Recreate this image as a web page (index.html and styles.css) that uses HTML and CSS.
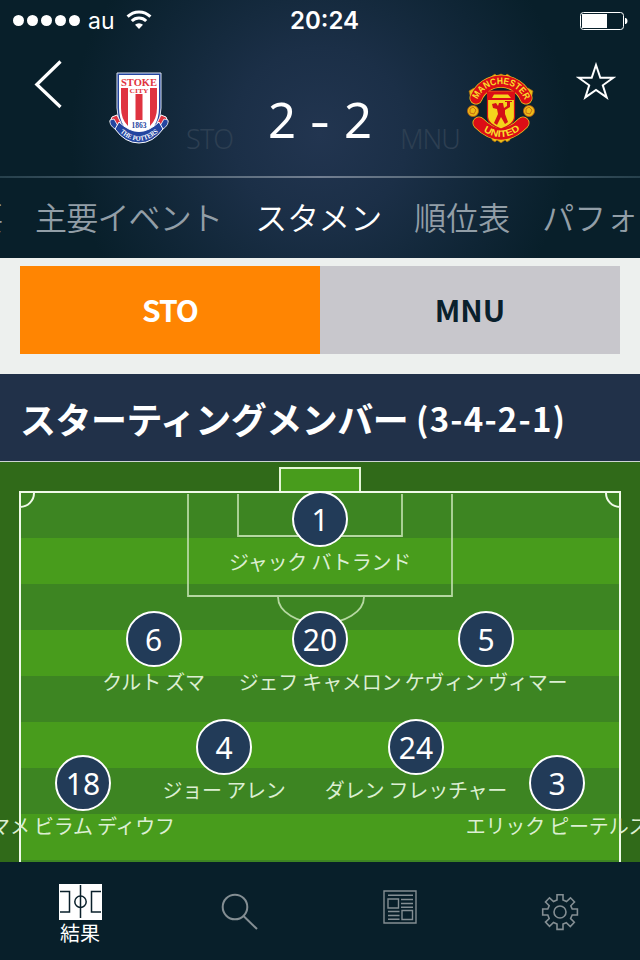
FILE: index.html
```html
<!DOCTYPE html>
<html lang="ja">
<head>
<meta charset="utf-8">
<title>STO 2 - 2 MNU</title>
<link rel="stylesheet" href="styles.css">
</head>
<body>
<header class="header">
  <div class="status">
    <div class="carrier">
      <span class="dots"><i></i><i></i><i></i><i></i><i></i></span>
      <span class="carrier-name">au</span>
      <svg class="wifi" width="26" height="20" viewBox="0 0 26 20" fill="none" stroke="#fff" stroke-width="3"><path d="M1.600 6.600a16.200 16.200 0 0 1 22.800 0"/><path d="M5.800 11a10.200 10.200 0 0 1 14.400 0"/><path d="M13 19l-4-4.200a5.800 5.800 0 0 1 8 0z" fill="#fff" stroke="none"/></svg>
    </div>
    <div class="clock">20:24</div>
    <svg class="battery" width="50" height="20" viewBox="0 0 50 20"><rect x="1.500" y="1.500" width="43" height="17" rx="3" fill="none" stroke="#fff" stroke-width="1"/><rect x="3" y="3" width="25" height="14" fill="#fff"/><path d="M46 7h1q1.500 1 1.500 3t-1.500 3H46z" fill="#fff"/></svg>
  </div>
  <div class="scorebar">
    <svg class="back" width="30" height="50" viewBox="0 0 30 50"><path d="M26.500 1.500L2.800 24.500l23.700 22.500" fill="none" stroke="#fff" stroke-width="3.200"/></svg>
    <svg class="crest crest-sto" width="60" height="72" viewBox="0 0 60 72">
      <path d="M8 1h44v35q0 24-22 32Q8 60 8 36z" fill="#2345a0" stroke="#dce3ee" stroke-width="1"/>
      <path d="M10 3h40v33q0 22-20 29Q10 58 10 36z" fill="#fff"/>
      <path d="M12 16h7v38q-7-7-7-18zM41 16h7v20q0 11-7 18zM26.500 22h7v26h-7z" fill="#df3340"/>
      <text x="30" y="13.500" class="c-sto" textLength="36" lengthAdjust="spacingAndGlyphs">STOKE</text>
      <path d="M20 15h20v6H20z" fill="#fff"/>
      <text x="30" y="20.500" class="c-city" textLength="19" lengthAdjust="spacingAndGlyphs">CITY</text>
      <path d="M1 50l2-5 5-2 4 8-4 5zM59 50l-2-5-5-2-4 8 4 5z" fill="#df3340" stroke="#fff"/>
      <path d="M1 48l4-1 4 7-3 3q-6-4-5-9zM59 48l-4-1-4 7 3 3q6-4 5-9z" fill="#2345a0" stroke="#fff" stroke-width=".8"/>
      <path d="M10 50Q30 69 50 50l4 7Q44 71 30 71T6 57z" fill="#2345a0" stroke="#fff" stroke-width="1"/>
      <text x="30" y="56" class="c-year" textLength="15" lengthAdjust="spacingAndGlyphs">1863</text>
      <path id="sto-arc" d="M8 57.500Q30 80 52 57.500" fill="none"/>
      <text class="c-motto"><textPath href="#sto-arc" startOffset="4" textLength="43" lengthAdjust="spacingAndGlyphs">THE POTTERS</textPath></text>
    </svg>
    <div class="team team-home">STO</div>
    <div class="score"><span>2</span><span class="dash">-</span><span>2</span></div>
    <div class="team team-away">MNU</div>
    <svg class="crest crest-mnu" width="68" height="70" viewBox="0 0 68 70">
      <g fill="#e9bd18" stroke="#a7650b" stroke-width=".7">
        <path d="M25 3l3-2 2 2 4-2 4 2 2-2 3 2v3H25zM25 67l3 2 2-2 4 3 4-3 2 2 3-2v-4H25z"/>
        <path d="M2 18l5-3 4 5-4 8-3-2zM66 18l-5-3-4 5 4 8 3-2z"/>
      </g>
      <ellipse cx="34" cy="35" rx="24" ry="26" fill="#0b202c"/>
      <path d="M9 25A27 27 0 0 1 59 25" fill="none" stroke="#edc51b" stroke-width="13" stroke-linecap="round"/>
      <path d="M9 25A27 27 0 0 1 59 25" fill="none" stroke="#dc0d16" stroke-width="11.500" stroke-linecap="round"/>
      <path d="M12 50Q34 72 56 50" fill="none" stroke="#edc51b" stroke-width="13" stroke-linecap="round"/>
      <path d="M12 50Q34 72 56 50" fill="none" stroke="#dc0d16" stroke-width="11.500" stroke-linecap="round"/>
      <path d="M20.500 18h27v26q0 7-13.500 12-13.500-5-13.500-12z" fill="#f4d31c" stroke="#d41016" stroke-width="1.200"/>
      <path d="M21 18.500h26V27H21z" fill="#dc0d16"/>
      <path d="M25 25l2-3.500h14l3 3.500z" fill="#f4d31c"/>
      <path d="M25 31l4-1 2 3 1-3h4l1 5 3-2v-4h-2v-1h7v1h-2v5l-5 3v4l3 8-3 2-4-7-4 8-3-2 4-9-1-5-4-1z" fill="#d41016"/>
      <g fill="#edbd18" stroke="#bf5b0e" stroke-width=".8"><circle cx="6" cy="38" r="5.500"/><circle cx="62" cy="38" r="5.500"/><path d="M3 36l3-2 3 3-2 4-4-1zM59 36l3-2 3 3-2 4-4-1z"/></g>
      <path id="mnu-top" d="M10 28A25.500 25.500 0 0 1 58 28" fill="none"/>
      <path id="mnu-bottom" d="M10 53Q34 75 58 53" fill="none"/>
      <text class="c-mnu"><textPath href="#mnu-top" startOffset="1.500" textLength="60" lengthAdjust="spacingAndGlyphs">MANCHESTER</textPath></text>
      <text class="c-mnu"><textPath href="#mnu-bottom" startOffset="8" textLength="40" lengthAdjust="spacingAndGlyphs">UNITED</textPath></text>
    </svg>
    <svg class="star" width="40" height="38" viewBox="0 0 40 38"><path d="M20 3l4.300 12.700H37.300L26.800 23.300 30.700 35.400 20 27.900 9.300 35.400l3.900-12.100L2.700 15.700h13z" fill="none" stroke="#fff" stroke-width="2"/></svg>
  </div>
  <nav class="tabs">
    <a>概要</a><a class="events">主要イベント</a><a class="active">スタメン</a><a>順位表</a><a>パフォーマンス</a>
  </nav>
</header>

<section class="switch">
  <button class="switch-item selected">STO</button>
  <button class="switch-item">MNU</button>
</section>

<h1 class="title"><span class="title-text">スターティングメンバー</span><span class="formation">(3-4-2-1)</span></h1>

<main class="pitch">
  <svg class="field" width="640" height="400" viewBox="0 0 640 400" fill="none">
    <path fill="#306a19" d="M0 0h640v400H0z"/>
    <path fill="#3d8522" d="M20 30h600v370H20z"/>
    <path fill="#489c1c" d="M20 76h600v46H20zM20 168h600v46H20zM20 260h600v46H20zM20 352h600v46H20zM280 6h80v24h-80z"/>
    <path d="M280 30V6h80v24" stroke="#e4f5d6" stroke-width="2"/>
    <path d="M188 32v102h264V32M238 32v42h164V32" stroke="#b5d8a1" stroke-width="1.800"/>
    <path d="M278 135a42 26 0 0 0 86 0" stroke="#b5d8a1" stroke-width="1.800"/>
    <path d="M20 400V30h600v370M34 31a14 14 0 0 1-14 14M606 31a14 14 0 0 0 14 14" stroke="#f0fae8" stroke-width="2"/>
  </svg>
  <div class="player gk"><b>1</b><span>ジャック バトランド</span></div>
  <div class="player cb-left"><b>6</b><span>クルト ズマ</span></div>
  <div class="player cb-mid"><b>20</b><span>ジェフ キャメロン</span></div>
  <div class="player cb-right"><b>5</b><span>ケヴィン ヴィマー</span></div>
  <div class="player cm-left"><b>4</b><span>ジョー アレン</span></div>
  <div class="player cm-right"><b>24</b><span>ダレン フレッチャー</span></div>
  <div class="player wing-left"><b>18</b><span>マメ ビラム ディウフ</span></div>
  <div class="player wing-right"><b>3</b><span>エリック ピーテルス</span></div>
</main>

<footer class="tabbar">
  <a class="tab-item current">
    <svg width="43" height="36" viewBox="0 0 43 36"><path fill="#fff" d="M0 0h43v36H0z"/><g fill="none" stroke="#0a202b" stroke-width="1.500"><path d="M21.500 1v33M1 7.500h9.500v20.500H1M42 7.500h-9.500v20.500H42"/><circle cx="21.500" cy="17.800" r="5.700"/></g></svg>
    <span>結果</span>
  </a>
  <a class="tab-item"><svg width="38" height="38" viewBox="0 0 38 38" fill="none" stroke="#848e93" stroke-width="2"><circle cx="14" cy="14" r="12.300"/><path d="M22.500 23L36 36"/></svg></a>
  <a class="tab-item news"><svg width="34" height="34" viewBox="0 0 34 34" fill="none" stroke="#848e93" stroke-width="1.400"><path d="M1 1h32v32H1zM5 5.200h25M5 9h10.500v9H5zM19 20.500h10.500v9H19zM18 9.500h12M18 13.500h12M18 17.200h12M5 21.500h11.500M5 25.500h11.500M5 29.200h11.500"/></svg></a>
  <a class="tab-item"><svg width="38" height="38" viewBox="0 0 38 38" fill="none" stroke="#848e93" stroke-width="1.600"><circle cx="19" cy="19" r="6"/><path d="M16 1.700h6V7l3.500 1.600 4-3.800 4 4.200-3.700 3.800L31.200 16h5.200v6h-5.200l-1.600 3.500 3.700 3.800-4 4.200-4-3.800L22 31v5.400h-6V31l-3.500-1.500-4 3.800-4-4.200 3.700-3.600L6.800 22H1.700v-6h5.100l1.400-3.300L4.500 9l4-4.200 4 3.800L16 7z"/></svg></a>
</footer>
</body>
</html>
```
FILE: styles.css
```css
* { box-sizing: border-box; }
body {
  margin: 0;
  width: 640px;
  height: 960px;
  overflow: hidden;
  background: #edf0ee;
  color: #fff;
  font-family: "Noto Sans CJK JP", sans-serif;
}
svg { display: block; flex: none; }

.header {
  height: 258px;
  overflow: hidden;
  background: radial-gradient(circle 250px at 320px 135px, #223550 0%, #1b2f47 35%, #0f2535 75%, #081f2a 100%);
}
.status {
  display: grid;
  grid-template-columns: 1fr auto 1fr;
  align-items: center;
  height: 41px;
  padding: 0 11px 0 13px;
  font-family: Inter, sans-serif;
}
.carrier { display: flex; align-items: center; }
.dots { display: flex; gap: 3px; }
.dots i { width: 11px; height: 11px; border-radius: 50%; background: #fff; }
.carrier-name { margin: 0 11px 0 8px; font-size: 23px; }
.wifi { margin-top: -2px; }
.clock { padding-left: 7px; font-size: 24px; font-weight: 600; letter-spacing: 0; }
.battery { justify-self: end; }

.scorebar {
  display: flex;
  align-items: flex-start;
  height: 137px;
  border-bottom: 2px solid;
  border-image: linear-gradient(90deg, #26404c, #727f91 50%, #26404c) 1;
}
.back { margin: 19px 0 0 34px; }
.crest-sto { margin: 31px 0 0 45px; }
.team { margin-top: 80px; font: 27px/36px "Noto Sans", sans-serif; font-weight: 300; color: #2d3f52; white-space: nowrap; }
.team-home { margin-left: 17px; width: 47px; letter-spacing: -.7px; }
.team-away { margin-left: 28px; width: 59px; letter-spacing: -1px; }
.score { display: flex; justify-content: space-between; width: 104px; margin: 44px 0 0 35px; font: 49px/68px "Noto Sans", sans-serif; }
.dash { transform: scaleX(1.25); }
.crest-mnu { margin: 32px 0 0 8px; }
.star { margin: 21px 0 0 41px; }
.crest text { font-family: "Liberation Serif", serif; font-weight: 700; }
.crest .c-sto { font-size: 11px; fill: #df3340; text-anchor: middle; }
.crest .c-city { font-size: 7px; fill: #df3340; text-anchor: middle; }
.crest .c-year { font-size: 8px; fill: #2345a0; text-anchor: middle; }
.crest .c-motto { font-size: 7px; fill: #fff; }
.crest .c-mnu { font-family: "Liberation Sans", sans-serif; font-size: 9.5px; fill: #f8df2c; }

.tabs {
  display: flex;
  height: 80px;
  margin-left: -61px;
  font-size: 32px;
  font-weight: 350;
  line-height: 77px;
  white-space: nowrap;
  color: #929ea7;
}
.tabs a { margin-right: 32px; }
.tabs .events { margin: 0 33px 0 0; width: 190px; letter-spacing: -.8px; }
.tabs .active { color: #fff; }

.switch { display: flex; height: 116px; padding: 8px 20px 20px; }
.switch-item {
  flex: 1;
  border: 0;
  border-radius: 0;
  padding: 0 0 2px;
  background: #c8c7cc;
  color: #0a202c;
  font: 700 30px "Noto Sans CJK JP", sans-serif;
}
.switch-item.selected { background: #ff8502; color: #fff; letter-spacing: -1px; }

.title {
  display: flex;
  align-items: center;
  height: 88px;
  margin: 0;
  padding-left: 20px;
  background: #213149;
  border-bottom: 1px solid #cdd5d4;
  font-size: 36px;
  font-weight: 700;
  white-space: nowrap;
}
.title-text { letter-spacing: -.5px; width: 396px; }
.formation { font-size: 33px; letter-spacing: 1.200px; }

.pitch { position: relative; height: 400px; overflow: hidden; }
.player { position: absolute; display: flex; flex-direction: column; align-items: center; width: 240px; margin: -28px 0 0 -120px; }
.player b {
  width: 56px;
  height: 56px;
  border: 2px solid #fff;
  border-radius: 50%;
  background: #223b58;
  font: 400 30px/53px "Noto Sans", sans-serif;
  text-align: center;
}
.player span { font-size: 20px; line-height: 30px; letter-spacing: -.2px; color: #dcefd2; white-space: nowrap; }
.gk { left: 320px; top: 57px; }
.cb-left { left: 153.5px; top: 177px; }
.cb-mid { left: 320px; top: 177px; }
.cb-right { left: 486px; top: 177px; }
.cm-left { left: 224px; top: 285px; }
.cm-right { left: 416px; top: 285px; }
.wing-left { left: 83px; top: 321px; }
.wing-left span { margin-left: -1px; }
.wing-right { left: 557px; top: 321px; }

.tabbar { display: grid; grid-template-columns: repeat(4, 1fr); height: 98px; background: #081f2a; }
.tab-item { display: flex; flex-direction: column; align-items: center; padding-top: 31px; }
.tab-item.current { padding-top: 22px; }
.tab-item.news { padding-top: 28px; }
.tab-item span { font-size: 20px; line-height: 26px; }
```
